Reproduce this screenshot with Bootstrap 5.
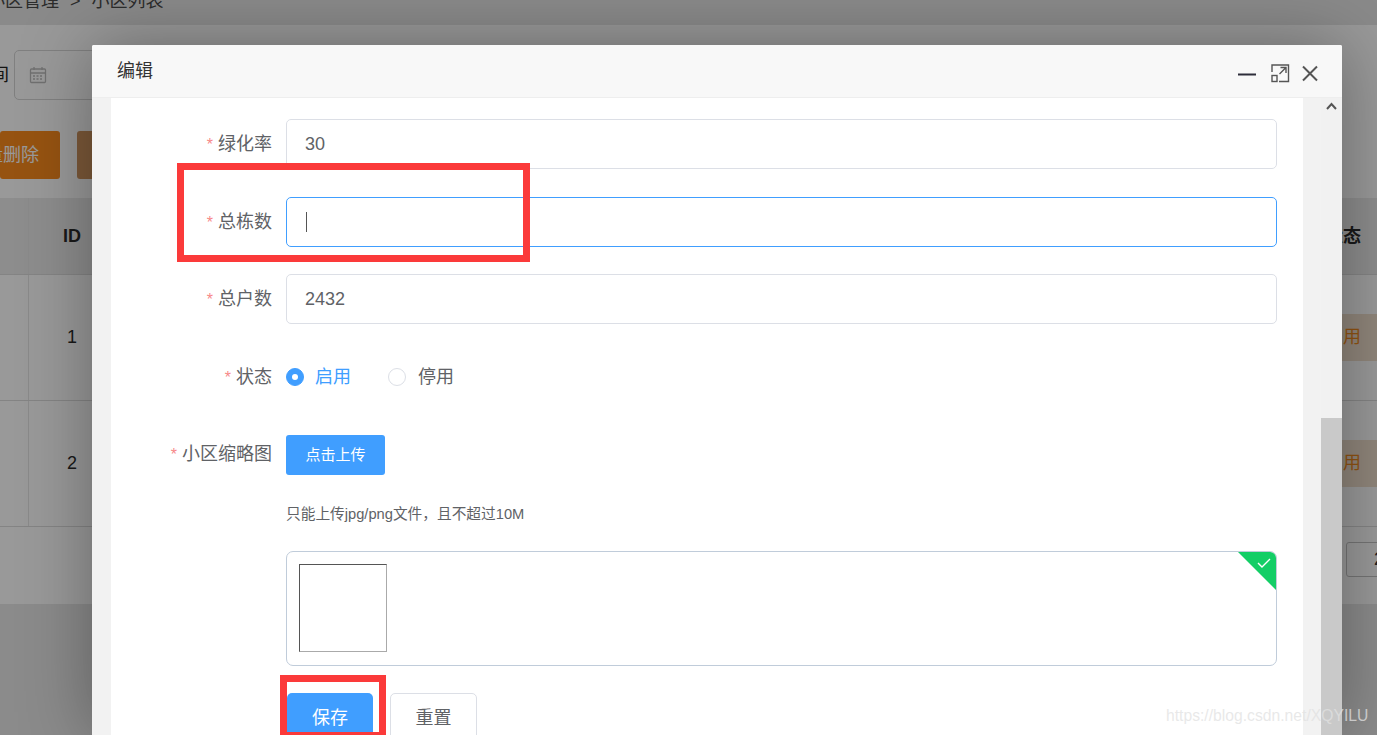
<!DOCTYPE html>
<html lang="zh">
<head>
<meta charset="utf-8">
<title>编辑</title>
<link href="https://cdn.jsdelivr.net/npm/bootstrap@5.3.0/dist/css/bootstrap.min.css" rel="stylesheet">
<style>
html,body{height:735px;overflow:hidden;margin:0}
body{font-family:"Liberation Sans","Noto Sans CJK SC",sans-serif;color:#606266;background:#e8e8e8;font-size:18px}
.stage{position:relative;width:1377px;height:735px;overflow:hidden}
/* page behind the dialog */
.crumb{height:25px;line-height:0;padding-top:1px;margin-left:-13px;white-space:nowrap;color:#4a4a4a;font-size:18px;background:#e6e6e6;word-spacing:6px}
.panel{background:#fff;height:579px}
.filter{height:106px;padding:25px 0 0 0}
.filter-lbl{margin-left:-27px;width:41px;flex:none;white-space:nowrap;color:#222;line-height:50px;height:50px}
.date-box{width:260px;height:50px;border:1px solid #d5d5d5;border-radius:5px;padding-left:14px}
.acts{height:67px}
.b-del,.b-exp{height:48px;border-radius:3px;color:#fff;line-height:48px;white-space:nowrap}
.b-del{width:60px;background:#fb8b1d;overflow:hidden}
.b-del span{display:block;margin-left:-33px}
.b-exp{width:100px;background:#cf9560;margin-left:17px}
.tb-head{height:77px;background:#ebebeb;border-bottom:1px solid #ddd}
.tb-row{height:126px;border-bottom:1px solid #ddd}
.cell-a{width:29px;border-right:1px solid #e6e6e6;height:100%}
.cell-id{width:86px;text-align:center;color:#2b2b2b;align-self:center}
.cell-end{width:52px;margin-left:auto;align-self:center;color:#2b2b2b;font-weight:700;white-space:nowrap;padding-left:0;margin-right:0}
.st-tag{width:77px;height:47px;margin-left:auto;align-self:center;background:#f0dfcd;color:#f08a1e;line-height:47px;padding-left:25px;white-space:nowrap}
.pager{height:78px;padding-top:15px;overflow:hidden}
.pg-box{width:60px;height:35px;margin-left:1346px;border:1px solid #c4c4c4;border-radius:3px;line-height:33px;padding-left:27px;color:#333}
.shade{position:absolute;inset:0;background:rgba(0,0,0,.4)}
/* dialog */
.dlg{position:absolute;left:92px;top:45px;width:1250px;height:690px;background:#fff;border-radius:2px 2px 0 0;box-shadow:0 0 70px rgba(0,0,0,.34);overflow:hidden}
.dlg-head{height:53px;background:#f8f8f8;border-bottom:1px solid #eee;padding:0 22px 0 25px;color:#333;flex:none}
.dlg-ctl{gap:13px;margin-top:3px}
.ctl-x{margin-left:-3px}
.dlg-body{flex:1;background:#f2f2f2;min-height:0}
.gut-l{width:19px;flex:none}
.gut-r{width:18px;flex:none}
.sheet{width:1192px;flex:none;background:#fff;padding:21px 26px 0 0;overflow:hidden}
.sbar{width:21px;flex:none;background:#f1f1f1;position:relative}
.sb-up{padding:4px 0 0 5px;height:320px}
.sb-th{background:#c9c9c9;height:318px}
.frow{height:50px;margin-bottom:28px}
.frow-b{margin-bottom:27px}
.flab{width:161px;margin-right:14px;text-align:right;flex:none;line-height:50px}
.flab i{font-style:normal;color:#f78989;margin-right:5px;font-size:16px}
.fin{height:50px;border:1px solid #dcdfe6;border-radius:5px;padding:0 18px;font-size:18px;color:#606266;box-shadow:none;flex:1;line-height:48px}
.fin-on{border-color:#409eff;position:relative}
.caret-bar{position:absolute;left:19px;top:14px;width:1px;height:20px;background:#555}
.rad{width:18px;height:18px;border-radius:50%;border:1px solid #dcdfe6;background:#fff;flex:none}
.rad-on{background:#409eff;border-color:#409eff;display:flex;align-items:center;justify-content:center}
.rad-on::after{content:"";width:6px;height:6px;border-radius:50%;background:#fff}
.rad-t{margin-left:11px;margin-right:37px}
.rad-t-on{color:#409eff}
.rad-t-off{margin-left:12px}
.frow-r{margin-bottom:33px}
.btn-up{width:99px;height:40px;padding:0;border:0;background:#409eff;color:#fff;font-size:15px;border-radius:3px}
.flab-u{line-height:38px;height:40px}
.hint{font-size:14.7px;margin:30px 0 0 175px;line-height:18px;color:#606266}
.ubox{position:relative;height:115px;margin:28px 0 0 175px;border:1px solid #c0ccda;border-radius:7px;padding:12px;overflow:hidden}
.thumb{width:88px;height:88px;border:1px solid;border-color:#555 #aaa #aaa #555}
.corner{position:absolute;right:-1px;top:-1px}
.acts2{margin:27px 0 0 176px;gap:17px}
.b-save,.b-reset{height:50px;font-size:18px;padding:0;border-radius:5px}
.b-save{width:86px;background:#409eff;border:0;color:#fff}
.b-reset{width:87px;background:#fff;border:1px solid #dcdfe6;color:#606266}
.mark-a,.mark-b{position:absolute;border:7px solid #fb3a3a;pointer-events:none}
.mark-a{left:177px;top:163px;width:353px;height:99px}
.mark-b{left:280px;top:675px;width:106px;height:64px}
.wm{position:absolute;left:1166px;top:704px;font-size:15.7px;line-height:24px;color:rgba(225,225,225,.75);white-space:nowrap}
</style>
</head>
<body>
<div class="stage">
  <div class="crumb">小区管理 &gt; 小区列表</div>
  <div class="panel">
    <div class="filter d-flex">
      <div class="filter-lbl">时间</div>
      <div class="date-box d-flex align-items-center">
        <svg width="18" height="18" viewBox="0 0 18 18" fill="none" stroke="#bbb" stroke-width="1.3"><rect x="1.5" y="3" width="15" height="13.5" rx="1"/><path d="M1.5 7h15M5 1v3M13 1v3"/><path d="M4 10h10M4 13h10" stroke-dasharray="2 1.500"/></svg>
      </div>
    </div>
    <div class="acts d-flex">
      <div class="b-del"><span>批量删除</span></div>
      <div class="b-exp"></div>
    </div>
    <div class="tb-head d-flex">
      <div class="cell-a"></div>
      <div class="cell-id fw-bold">ID</div>
      <div class="cell-end">状态</div>
    </div>
    <div class="tb-row d-flex">
      <div class="cell-a"></div>
      <div class="cell-id">1</div>
      <div class="st-tag">启用</div>
    </div>
    <div class="tb-row d-flex">
      <div class="cell-a"></div>
      <div class="cell-id">2</div>
      <div class="st-tag">启用</div>
    </div>
    <div class="pager"><div class="pg-box">2</div></div>
  </div>
  <div class="shade"></div>

  <div class="dlg d-flex flex-column">
    <div class="dlg-head d-flex align-items-center justify-content-between">
      <span>编辑</span>
      <div class="dlg-ctl d-flex align-items-center">
        <svg width="20" height="20" viewBox="0 0 20 20"><path d="M1 11.500h18" stroke="#2d2d3a" stroke-width="2"/></svg>
        <svg width="20" height="20" viewBox="0 0 20 20" fill="none" stroke="#555" stroke-width="1.4"><path d="M2 9V2h16.500v16.500H9"/><rect x="2" y="12.500" width="5" height="6"/><path d="M9.500 11 15.500 5M10.500 4.500h5.500V10"/></svg>
        <svg class="ctl-x" width="20" height="20" viewBox="0 0 20 20" fill="none" stroke="#555" stroke-width="2"><path d="M3 3.500l14 14M17 3.500l-14 14"/></svg>
      </div>
    </div>
    <div class="dlg-body d-flex">
      <div class="gut-l"></div>
      <div class="sheet">
        <div class="frow d-flex"><div class="flab"><i>*</i>绿化率</div><div class="fin form-control">30</div></div>
        <div class="frow frow-b d-flex"><div class="flab"><i>*</i>总栋数</div><div class="fin fin-on form-control"><span class="caret-bar"></span></div></div>
        <div class="frow d-flex"><div class="flab"><i>*</i>总户数</div><div class="fin form-control">2432</div></div>
        <div class="frow frow-r d-flex align-items-center">
          <div class="flab"><i>*</i>状态</div>
          <span class="rad rad-on"></span><span class="rad-t rad-t-on">启用</span>
          <span class="rad"></span><span class="rad-t rad-t-off">停用</span>
        </div>
        <div class="d-flex">
          <div class="flab flab-u"><i>*</i>小区缩略图</div>
          <button class="btn btn-up" type="button">点击上传</button>
        </div>
        <div class="hint">只能上传jpg/png文件，且不超过10M</div>
        <div class="ubox">
          <div class="thumb"></div>
          <svg class="corner" width="40" height="40" viewBox="0 0 40 40"><path d="M0 0H40V40Z" fill="#13ce66"/><path d="M21 12l4 4 8-8" fill="none" stroke="#fff" stroke-width="1.4"/></svg>
        </div>
        <div class="acts2 d-flex">
          <button class="btn b-save" type="button">保存</button>
          <button class="btn b-reset" type="button">重置</button>
        </div>
      </div>
      <div class="gut-r"></div>
      <div class="sbar">
        <div class="sb-up"><svg class="d-block" width="11" height="8" viewBox="0 0 11 8" fill="none" stroke="#555" stroke-width="2"><path d="M1 7l4.500-5 4.500 5"/></svg></div>
        <div class="sb-th"></div>
      </div>
    </div>
  </div>

  <div class="mark-a"></div>
  <div class="mark-b"></div>
  <div class="wm">https://blog.csdn.net/XQYILU</div>
</div>
<script src="https://cdn.jsdelivr.net/npm/bootstrap@5.3.0/dist/js/bootstrap.bundle.min.js"></script>
</body>
</html>
